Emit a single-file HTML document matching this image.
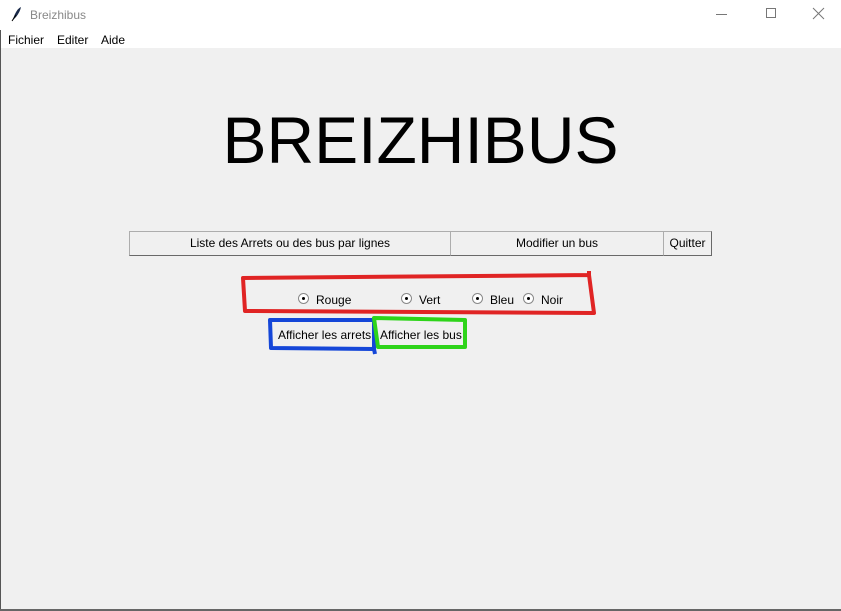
<!DOCTYPE html>
<html><head><meta charset="utf-8"><style>
body{margin:0;width:841px;height:611px;overflow:hidden;background:#f0f0f0;font-family:"Liberation Sans",sans-serif;position:relative}
.a{position:absolute}
.t{font-size:12px;color:#000;white-space:nowrap}
.btn{position:absolute;top:231px;height:25px;background:#f0f0f0;border:1px solid #adadad;border-right-color:#696969;border-bottom-color:#696969;box-sizing:border-box;font-size:12px;line-height:23px;text-align:center}
.r{position:absolute;width:9px;height:9px;border-radius:50%;border:1px solid #888;background:#fff;top:293px}
.r::after{content:"";position:absolute;left:3px;top:3px;width:3px;height:3px;background:#000;border-radius:50%}
</style></head><body>
<div class="a" style="left:0;top:0;width:841px;height:48px;background:#fff"></div>
<div class="a" style="left:0;top:30px;width:1px;height:581px;background:#555"></div>
<div class="a" style="left:0;top:609px;width:841px;height:2px;background:#666"></div>
<svg class="a" style="left:9px;top:6px" width="14" height="16"><path d="M3 15 L6 8 Q9 2 12 1 Q11 6 7 11 Z" fill="#1a2a4a"/><path d="M3 15 L7 9" stroke="#000"/></svg>
<div class="a t" style="left:30px;top:8px;color:#888">Breizhibus</div>
<div class="a" style="left:716px;top:14px;width:11px;height:1px;background:#777"></div>
<div class="a" style="left:766px;top:8px;width:10px;height:10px;border:1px solid #777;box-sizing:border-box"></div>
<svg class="a" style="left:812px;top:7px" width="13" height="13"><path d="M1 1L12 12M12 1L1 12" stroke="#777"/></svg>
<div class="a t" style="left:8px;top:33px">Fichier</div>
<div class="a t" style="left:57px;top:33px">Editer</div>
<div class="a t" style="left:101px;top:33px">Aide</div>
<div class="a" style="left:0;top:101px;width:841px;text-align:center;font-size:66px;line-height:78px">BREIZHIBUS</div>
<div class="btn" style="left:129px;width:322px">Liste des Arrets ou des bus par lignes</div>
<div class="btn" style="left:450px;width:214px">Modifier un bus</div>
<div class="btn" style="left:663px;width:49px">Quitter</div>
<div class="r" style="left:298px"></div><div class="a t" style="left:316px;top:293px">Rouge</div>
<div class="r" style="left:401px"></div><div class="a t" style="left:419px;top:293px">Vert</div>
<div class="r" style="left:472px"></div><div class="a t" style="left:490px;top:293px">Bleu</div>
<div class="r" style="left:523px"></div><div class="a t" style="left:541px;top:293px">Noir</div>
<div class="a t" style="left:278px;top:328px">Afficher les arrets</div>
<div class="a t" style="left:380px;top:328px">Afficher les bus</div>
<svg class="a" style="left:0;top:0" width="841" height="611">
<path d="M243 278 L589 275 L594 313 L245 311 Z M589 275 L589 271" fill="none" stroke="#e02424" stroke-width="4" stroke-linejoin="round"/>
<path d="M270 320 L374 320 L374 349 L271 348 Z M374 349 L375 354" fill="none" stroke="#1446d8" stroke-width="4" stroke-linejoin="round"/>
<path d="M374 318 L465 320 L465 347 L378 347 Z" fill="none" stroke="#2ed41a" stroke-width="4" stroke-linejoin="round"/>
</svg>
</body></html>
